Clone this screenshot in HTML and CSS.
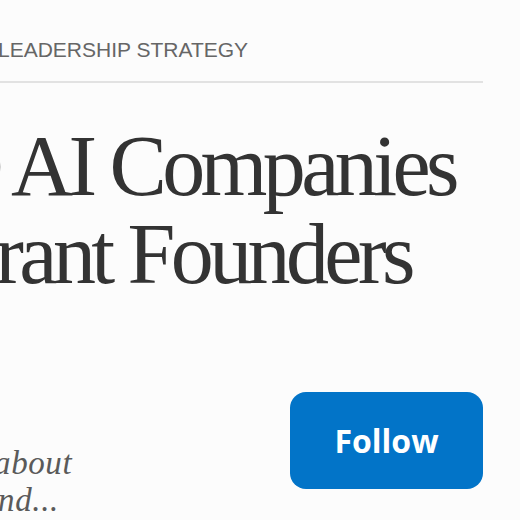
FILE: index.html
```html
<!DOCTYPE html>
<html lang="en">
<head>
<meta charset="utf-8">
<title>Top 10 AI Companies With Immigrant Founders</title>
<link rel="stylesheet" href="styles.css">
</head>
<body>
<main class="page">
  <header class="kicker">
    <span class="kicker-text">LEADERSHIP STRATEGY</span>
  </header>
  <h1 class="headline">
    <span class="line line-1">10 AI Companies</span>
    <span class="line line-2">Immigrant Founders</span>
  </h1>
  <div class="meta-row">
    <p class="deck">
      <span class="line deck-1">is about</span>
      <span class="line deck-2">and...</span>
    </p>
    <button class="follow" type="button">Follow</button>
  </div>
</main>
</body>
</html>
```
FILE: styles.css
```css
html, body {
  margin: 0;
  padding: 0;
  background: #fcfcfc;
  overflow: hidden;
}

.page {
  width: 485px;
  margin-left: -2px;
  padding-top: 38px;
}

.kicker {
  padding-bottom: 19px;
  border-bottom: 2px solid #e2e2e2;
}

.kicker-text {
  display: block;
  font-family: "Liberation Sans", Arial, sans-serif;
  font-size: 21px;
  line-height: 24px;
  color: #666;
  white-space: nowrap;
}

.line {
  display: block;
  white-space: nowrap;
}

.headline {
  margin: 39px 0 0;
  font-family: "Liberation Serif", "Times New Roman", serif;
  font-weight: 400;
  font-size: 86px;
  line-height: 88px;
  letter-spacing: -4.6px;
  color: #333;
}

.line-1 { margin-left: -76px; }
.line-2 { margin-left: -209px; }

.meta-row {
  display: flex;
  justify-content: space-between;
  align-items: flex-start;
  margin-top: 94px;
}

.deck {
  margin: 53px 0 0;
  font-family: "Liberation Serif", Georgia, serif;
  font-style: italic;
  font-size: 33px;
  line-height: 37px;
  letter-spacing: 0.6px;
  color: #5a5a5a;
}

.deck-1 { margin-left: -36px; }
.deck-2 { margin-left: -17px; }

.follow {
  width: 193px;
  height: 97px;
  border: 0;
  border-radius: 16px;
  background: #0274c8;
  color: #fff;
  font-family: "Open Sans", "Noto Sans", sans-serif;
  font-weight: 700;
  font-size: 32px;
  padding: 0;
  cursor: pointer;
}
```
